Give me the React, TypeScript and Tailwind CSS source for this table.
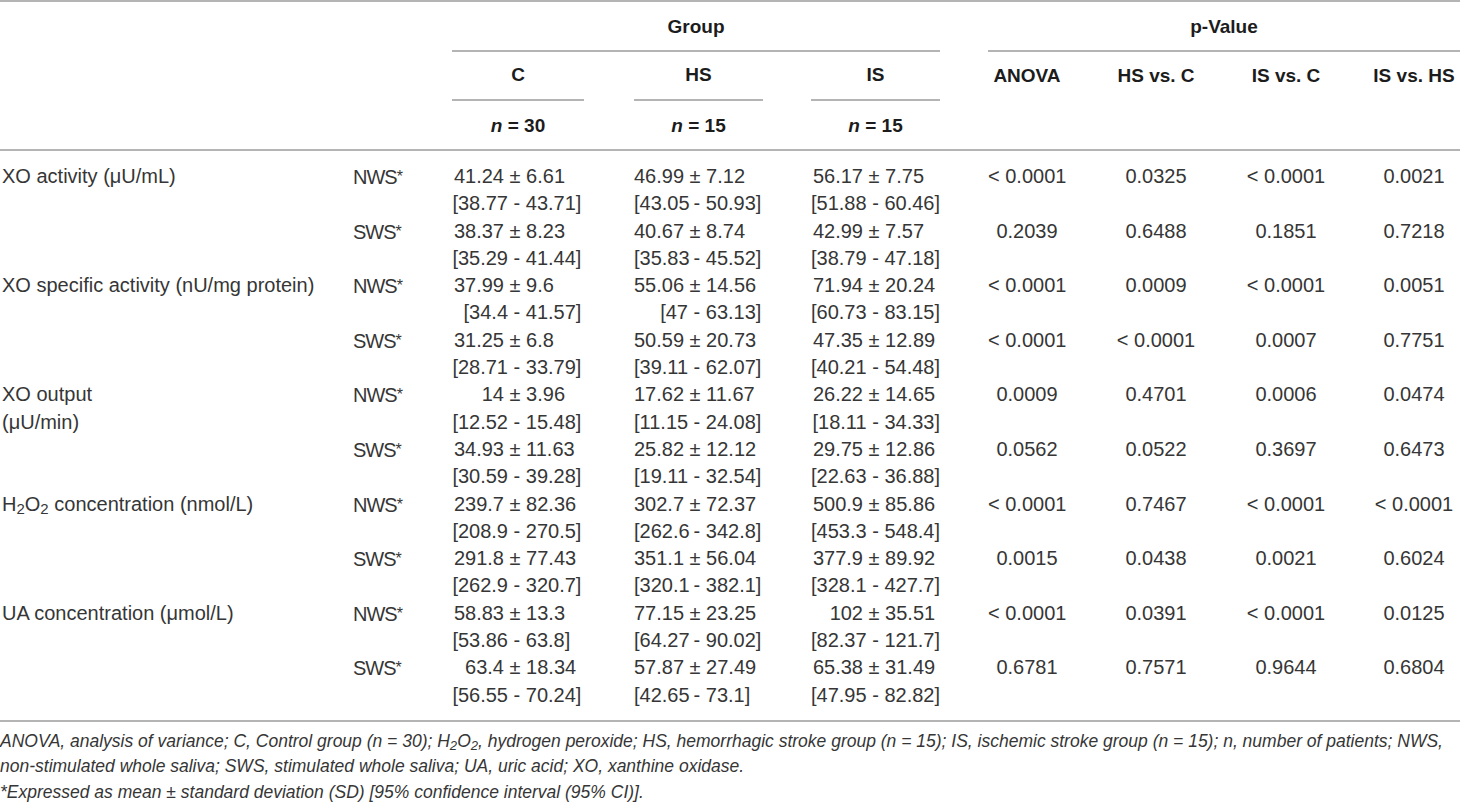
import React from "react";

const cols =
  "grid grid-cols-[350px_102px_132px_50px_129px_48px_129px_48px_78px_30px_120px_10px_120px_22px_92px]";

type Group = [string, string];
type Sample = {
  name: string;
  groups: [Group, Group, Group];
  p: [string, string, string, string];
};
type Measure = { label: React.ReactNode; samples: [Sample, Sample] };

const measures: Measure[] = [
  {
    label: "XO activity (μU/mL)",
    samples: [
      {
        name: "NWS",
        groups: [
          ["41.24 ± 6.61", "[38.77 - 43.71]"],
          ["46.99 ± 7.12", "[43.05 - 50.93]"],
          ["56.17 ± 7.75", "[51.88 - 60.46]"],
        ],
        p: ["< 0.0001", "0.0325", "< 0.0001", "0.0021"],
      },
      {
        name: "SWS",
        groups: [
          ["38.37 ± 8.23", "[35.29 - 41.44]"],
          ["40.67 ± 8.74", "[35.83 - 45.52]"],
          ["42.99 ± 7.57", "[38.79 - 47.18]"],
        ],
        p: ["0.2039", "0.6488", "0.1851", "0.7218"],
      },
    ],
  },
  {
    label: "XO specific activity (nU/mg protein)",
    samples: [
      {
        name: "NWS",
        groups: [
          ["37.99 ± 9.6", "[34.4 - 41.57]"],
          ["55.06 ± 14.56", "[47 - 63.13]"],
          ["71.94 ± 20.24", "[60.73 - 83.15]"],
        ],
        p: ["< 0.0001", "0.0009", "< 0.0001", "0.0051"],
      },
      {
        name: "SWS",
        groups: [
          ["31.25 ± 6.8", "[28.71 - 33.79]"],
          ["50.59 ± 20.73", "[39.11 - 62.07]"],
          ["47.35 ± 12.89", "[40.21 - 54.48]"],
        ],
        p: ["< 0.0001", "< 0.0001", "0.0007", "0.7751"],
      },
    ],
  },
  {
    label: (
      <>
        XO output
        <br />
        (μU/min)
      </>
    ),
    samples: [
      {
        name: "NWS",
        groups: [
          ["14 ± 3.96", "[12.52 - 15.48]"],
          ["17.62 ± 11.67", "[11.15 - 24.08]"],
          ["26.22 ± 14.65", "[18.11 - 34.33]"],
        ],
        p: ["0.0009", "0.4701", "0.0006", "0.0474"],
      },
      {
        name: "SWS",
        groups: [
          ["34.93 ± 11.63", "[30.59 - 39.28]"],
          ["25.82 ± 12.12", "[19.11 - 32.54]"],
          ["29.75 ± 12.86", "[22.63 - 36.88]"],
        ],
        p: ["0.0562", "0.0522", "0.3697", "0.6473"],
      },
    ],
  },
  {
    label: (
      <>
        H<sub>2</sub>O<sub>2</sub> concentration (nmol/L)
      </>
    ),
    samples: [
      {
        name: "NWS",
        groups: [
          ["239.7 ± 82.36", "[208.9 - 270.5]"],
          ["302.7 ± 72.37", "[262.6 - 342.8]"],
          ["500.9 ± 85.86", "[453.3 - 548.4]"],
        ],
        p: ["< 0.0001", "0.7467", "< 0.0001", "< 0.0001"],
      },
      {
        name: "SWS",
        groups: [
          ["291.8 ± 77.43", "[262.9 - 320.7]"],
          ["351.1 ± 56.04", "[320.1 - 382.1]"],
          ["377.9 ± 89.92", "[328.1 - 427.7]"],
        ],
        p: ["0.0015", "0.0438", "0.0021", "0.6024"],
      },
    ],
  },
  {
    label: "UA concentration (μmol/L)",
    samples: [
      {
        name: "NWS",
        groups: [
          ["58.83 ± 13.3", "[53.86 - 63.8]"],
          ["77.15 ± 23.25", "[64.27 - 90.02]"],
          ["102 ± 35.51", "[82.37 - 121.7]"],
        ],
        p: ["< 0.0001", "0.0391", "< 0.0001", "0.0125"],
      },
      {
        name: "SWS",
        groups: [
          ["63.4 ± 18.34", "[56.55 - 70.24]"],
          ["57.87 ± 27.49", "[42.65 - 73.1]"],
          ["65.38 ± 31.49", "[47.95 - 82.82]"],
        ],
        p: ["0.6781", "0.7571", "0.9644", "0.6804"],
      },
    ],
  },
];

// left part widths so "±" and "-" line up down each column
const groupCols = [
  { start: "col-start-3", mean: "w-[52px]", ci: "w-[56px]" },
  { start: "col-start-5", mean: "w-[50px]", ci: "w-[54px]" },
  { start: "col-start-7", mean: "w-[52px]", ci: "w-[56px]" },
];
const pCols = ["col-start-9", "col-start-11", "col-start-13", "col-start-15"];

const Aligned = ({ text, sep, w }: { text: string; sep: string; w: string }) => {
  const [left, right] = text.split(` ${sep} `);
  return (
    <div className="flex whitespace-pre">
      <span className={`${w} text-right`}>{left}</span>
      <span>{` ${sep} ${right}`}</span>
    </div>
  );
};

const SampleRow = ({ label, s }: { label?: React.ReactNode; s: Sample }) => (
  <div className={`${cols} leading-[27.3px]`}>
    <div className="col-start-1 pl-[2px]">{label}</div>
    <div className="col-start-2 pl-[3px]">
      <span className="tracking-[-1px]">{s.name}</span>
      <span className="text-[16px] align-[2px]">*</span>
    </div>
    {s.groups.map((g, i) => (
      <div key={i} className={groupCols[i].start}>
        <Aligned text={g[0]} sep="±" w={groupCols[i].mean} />
        <Aligned text={g[1]} sep="-" w={groupCols[i].ci} />
      </div>
    ))}
    {s.p.map((p, i) => (
      <div key={i} className={`${pCols[i]} text-center whitespace-nowrap`}>
        {p}
      </div>
    ))}
  </div>
);

export default function App() {
  return (
    <div className="w-[1460px] h-[804px] bg-white overflow-hidden font-['Liberation_Sans',Arial,sans-serif]">
      {/* Header */}
      <div className="border-t-2 border-[#b4b4b4] text-[19px] font-bold text-[#1c1c1c]">
        <div className={`${cols} h-[50px]`}>
          <div className="col-start-3 col-end-8 border-b-2 border-[#b4b4b4] flex items-center justify-center pt-[3px]">
            Group
          </div>
          <div className="col-start-9 col-end-16 border-b-2 border-[#b4b4b4] flex items-center justify-center pt-[3px]">
            p-Value
          </div>
        </div>
        <div className={`${cols} h-[49px]`}>
          {["C", "HS", "IS"].map((t, i) => (
            <div
              key={t}
              className={`${groupCols[i].start} border-b-2 border-[#b4b4b4] flex items-center justify-center`}
            >
              {t}
            </div>
          ))}
          {["ANOVA", "HS vs. C", "IS vs. C", "IS vs. HS"].map((t, i) => (
            <div key={t} className={`${pCols[i]} flex items-center justify-center whitespace-nowrap`}>
              {t}
            </div>
          ))}
        </div>
        <div className={`${cols} h-[50px] border-b-2 border-[#b4b4b4]`}>
          {["30", "15", "15"].map((n, i) => (
            <div key={i} className={`${groupCols[i].start} flex items-center justify-center pt-[2px]`}>
              <span>
                <i>n</i> = {n}
              </span>
            </div>
          ))}
        </div>
      </div>

      {/* Body */}
      <div className="pt-[12px] pb-[11px] border-b-2 border-[#b4b4b4] text-[20px] text-[#363636]">
        {measures.map((m, i) => (
          <div key={i}>
            <SampleRow label={m.label} s={m.samples[0]} />
            <SampleRow s={m.samples[1]} />
          </div>
        ))}
      </div>

      {/* Footnotes */}
      <div className="pt-[7px] text-[17.5px] italic leading-[25.5px] text-[#363636] whitespace-nowrap">
        <p>
          ANOVA, analysis of variance; C, Control group (n = 30); H<sub>2</sub>O<sub>2</sub>, hydrogen peroxide;
          HS, hemorrhagic stroke group (n = 15); IS, ischemic stroke group (n = 15); n, number of patients; NWS,
        </p>
        <p>non-stimulated whole saliva; SWS, stimulated whole saliva; UA, uric acid; XO, xanthine oxidase.</p>
        <p>*Expressed as mean ± standard deviation (SD) [95% confidence interval (95% CI)].</p>
      </div>
    </div>
  );
}
